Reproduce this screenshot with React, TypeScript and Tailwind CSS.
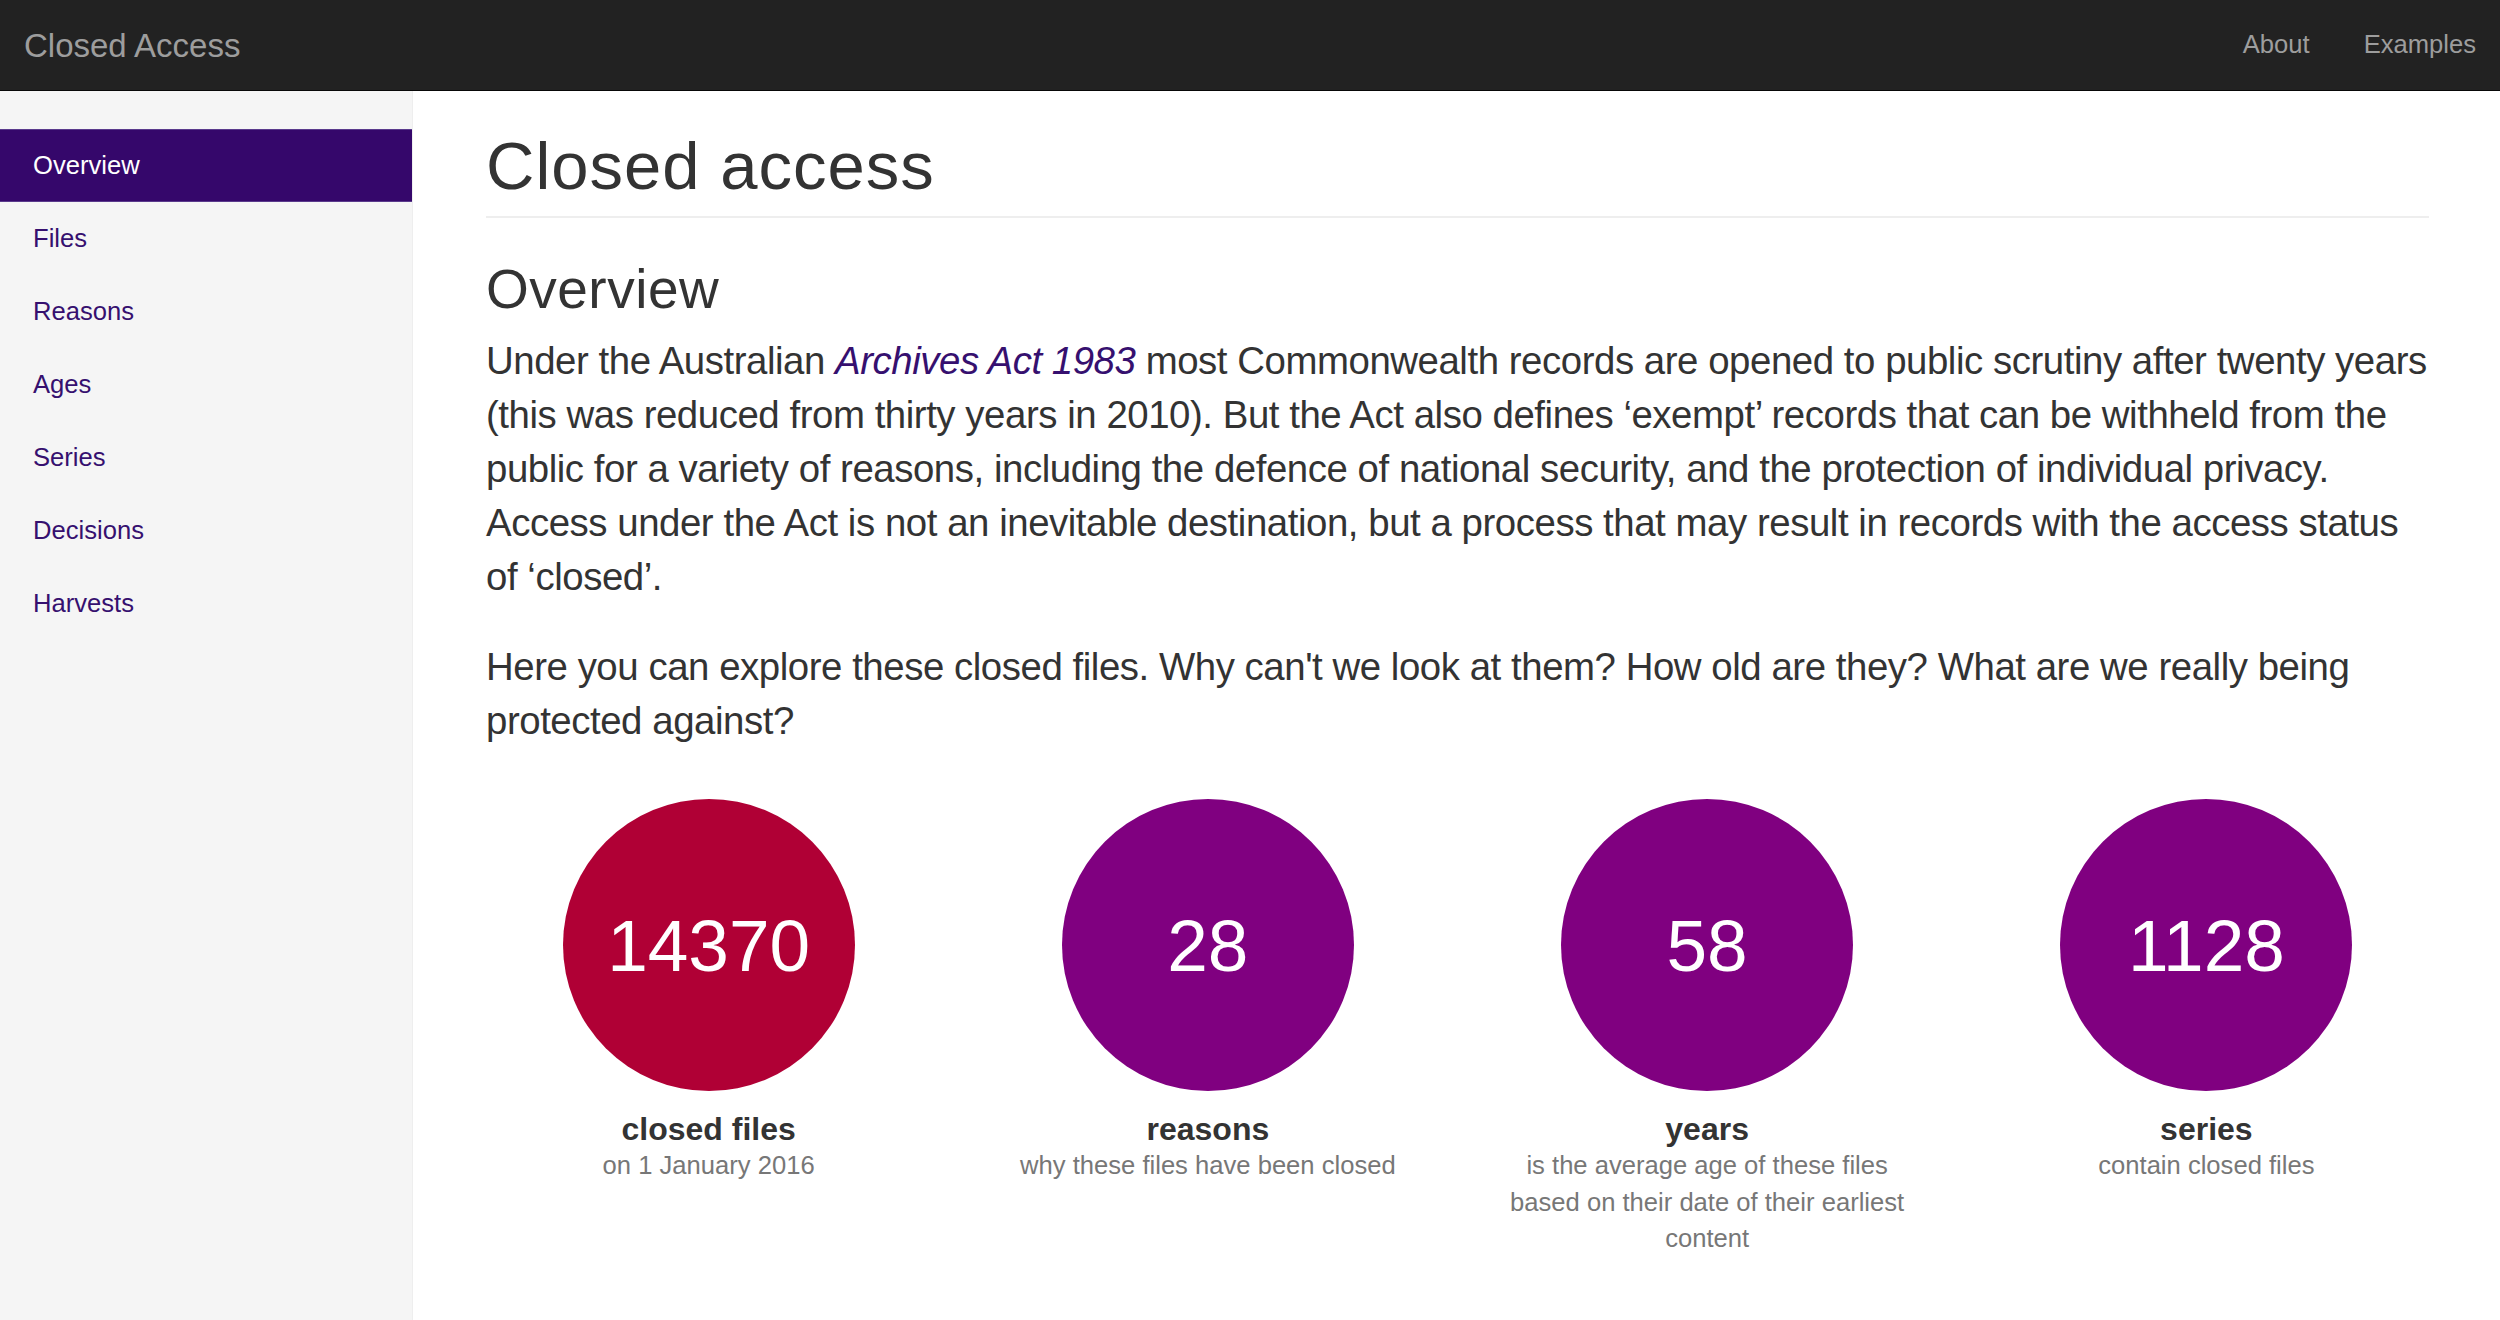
import React from 'react';

const navItems = ['Overview', 'Files', 'Reasons', 'Ages', 'Series', 'Decisions', 'Harvests'];

const stats = [
  { value: '14370', label: 'closed files', note: 'on 1 January 2016', color: 'bg-[#b00035]' },
  { value: '28', label: 'reasons', note: 'why these files have been closed', color: 'bg-[#800080]' },
  { value: '58', label: 'years', note: 'is the average age of these files based on their date of their earliest content', color: 'bg-[#800080]' },
  { value: '1128', label: 'series', note: 'contain closed files', color: 'bg-[#800080]' },
];

const App: React.FC = () => {
  return (
    <div className="min-h-screen bg-white text-[#333] font-['Liberation_Sans',Arial,sans-serif]">
      {/* Top navbar */}
      <header className="h-[91px] bg-[#222] border-b border-[#080808] flex items-center justify-between px-[24px]">
        <span className="text-[33px] text-[#9d9d9d] leading-none">Closed Access</span>
        <nav className="flex items-center gap-[54px] text-[25.6px] text-[#9d9d9d] leading-none">
          <span>About</span>
          <span>Examples</span>
        </nav>
      </header>

      <div className="flex min-h-[1229px]">
        {/* Sidebar */}
        <aside className="w-[413px] shrink-0 bg-[#f5f5f5] border-r border-[#eee] pt-[38px]">
          <ul>
            {navItems.map((item, index) => (
              <li key={item}>
                {index === 0 ? (
                  <div className="h-[73px] flex items-center px-[33px] bg-[#35076b] text-white text-[25.6px] border-y border-[#5a3a8c]">
                    {item}
                  </div>
                ) : (
                  <div className="h-[73px] flex items-center px-[33px] text-[#36106f] text-[25.6px]">
                    {item}
                  </div>
                )}
              </li>
            ))}
          </ul>
        </aside>

        {/* Main content */}
        <main className="flex-1 pl-[73px] pr-[71px]">
          <div className="pt-[41px] pb-[17px] border-b-2 border-[#eee]">
            <h1 className="text-[67px] font-medium leading-none tracking-[1px]">Closed access</h1>
          </div>

          <h2 className="mt-[44px] text-[55px] font-medium leading-none tracking-[0.5px]">Overview</h2>

          <p className="mt-[17px] text-[38.4px] leading-[54px] tracking-[-0.45px]">
            Under the Australian <a className="italic text-[#36106f]">Archives Act 1983</a> most Commonwealth records are opened to public scrutiny after twenty years<br />
            (this was reduced from thirty years in 2010). But the Act also defines ‘exempt’ records that can be withheld from the<br />
            public for a variety of reasons, including the defence of national security, and the protection of individual privacy.<br />
            Access under the Act is not an inevitable destination, but a process that may result in records with the access status<br />
            of ‘closed’.
          </p>
          <p className="mt-[36px] text-[38.4px] leading-[54px] tracking-[-0.45px]">
            Here you can explore these closed files. Why can't we look at them? How old are they? What are we really being protected against?
          </p>

          {/* Stat circles */}
          <div className="mt-[51px] -mx-[27px] grid grid-cols-4">
            {stats.map((s) => (
              <div key={s.label} className="px-[27px] flex flex-col items-center text-center">
                <div className={`w-[292px] h-[292px] rounded-full ${s.color} flex items-center justify-center`}>
                  <span className="text-white text-[73px] leading-none">{s.value}</span>
                </div>
                <h4 className="mt-[20px] text-[32px] font-bold leading-[36px] text-[#333]">{s.label}</h4>
                <p className="w-[415px] text-[25.6px] leading-[36.6px] text-[#777]">{s.note}</p>
              </div>
            ))}
          </div>
        </main>
      </div>
    </div>
  );
};

export default App;
